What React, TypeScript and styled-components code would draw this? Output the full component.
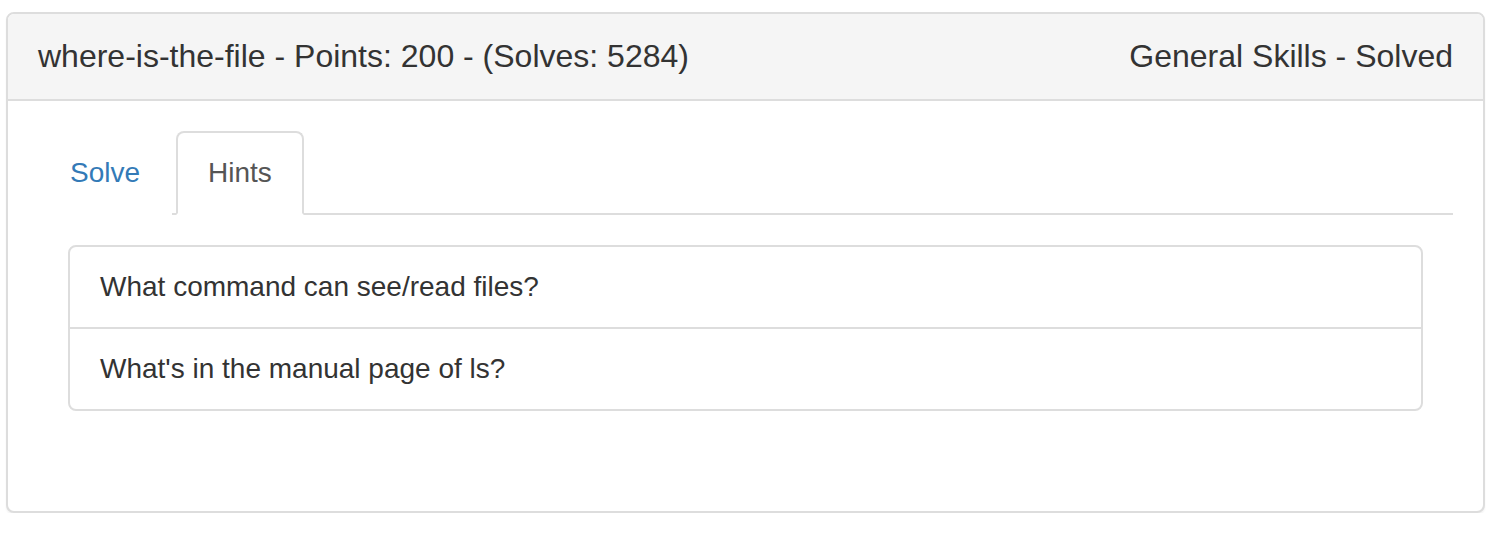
import React, {useState} from "react";
import styled, {createGlobalStyle} from "styled-components";

const GlobalStyle = createGlobalStyle`
    html, body {
        margin: 0;
        padding: 0;
        background: #fff;
    }
    body {
        font-family: "Liberation Sans", Arial, Helvetica, sans-serif;
        color: #333;
    }
    * {
        box-sizing: border-box;
    }
`;

const Panel = styled.div`
    margin: 12px 19px 0 6px;
    border: 2px solid #ddd;
    border-radius: 8px;
    background: #fff;
    box-shadow: 0 2px 2px rgba(0, 0, 0, 0.05);
    overflow: hidden;
`;

const PanelHeading = styled.div`
    display: flex;
    justify-content: space-between;
    align-items: center;
    padding: 20px 30px;
    background: #f5f5f5;
    border-bottom: 2px solid #ddd;
`;

const PanelTitle = styled.h3`
    margin: 0;
    font-size: 32px;
    font-weight: 400;
    line-height: 45px;
    color: #333;
`;

const PanelBody = styled.div`
    padding: 30px;
`;

const TabList = styled.ul`
    display: flex;
    margin: 0;
    padding: 0;
    list-style: none;
    border-bottom: 2px solid #ddd;
`;

const TabItem = styled.li<{ $active: boolean }>`
    margin: 0 4px -2px 0;
    padding: 20px 30px;
    font-size: 28px;
    line-height: 40px;
    border: 2px solid ${(p) => (p.$active ? "#ddd" : "transparent")};
    border-bottom-color: ${(p) => (p.$active ? "#fff" : "transparent")};
    border-radius: 8px 8px 0 0;
    background: #fff;
    color: ${(p) => (p.$active ? "#555" : "#337ab7")};
    cursor: ${(p) => (p.$active ? "default" : "pointer")};
`;

const TabPane = styled.div`
    padding: 30px;
`;

const ListGroup = styled.ul`
    margin: 0 0 40px;
    padding: 0;
    list-style: none;
`;

const ListItem = styled.li`
    padding: 20px 30px;
    margin-bottom: -2px;
    font-size: 28px;
    line-height: 40px;
    color: #333;
    border: 2px solid #ddd;
    background: #fff;

    &:first-child {
        border-radius: 8px 8px 0 0;
    }

    &:last-child {
        margin-bottom: 0;
        border-radius: 0 0 8px 8px;
    }
`;

const hints = [
    "What command can see/read files?",
    "What's in the manual page of ls?",
];

export default function App() {
    const [tab, setTab] = useState("hints");

    return (
        <>
            <GlobalStyle/>
            <Panel>
                <PanelHeading>
                    <PanelTitle>where-is-the-file - Points: 200 - (Solves: 5284)</PanelTitle>
                    <PanelTitle>General Skills - Solved</PanelTitle>
                </PanelHeading>
                <PanelBody>
                    <TabList>
                        <TabItem $active={tab === "solve"} onClick={() => setTab("solve")}>Solve</TabItem>
                        <TabItem $active={tab === "hints"} onClick={() => setTab("hints")}>Hints</TabItem>
                    </TabList>
                    <TabPane>
                        <ListGroup>
                            {hints.map((h) => (
                                <ListItem key={h}>{h}</ListItem>
                            ))}
                        </ListGroup>
                    </TabPane>
                </PanelBody>
            </Panel>
        </>
    );
}
